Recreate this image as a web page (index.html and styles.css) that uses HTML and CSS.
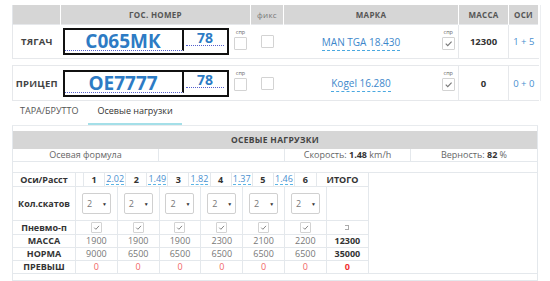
FILE: index.html
```html
<!DOCTYPE html>
<html lang="ru">
<head>
    <meta charset="UTF-8">
    <title>Осевые нагрузки</title>
    <link rel="stylesheet" href="styles.css">
</head>
<body>
    <div class="vehicles">
        <table class="vehTable">
            <colgroup>
                <col style="width:48px"><col style="width:170px"><col style="width:20px"><col style="width:33px">
                <col style="width:155px"><col style="width:20px"><col style="width:50px"><col style="width:30px">
            </colgroup>
            <tr class="headRow">
                <th></th>
                <th colspan="2">ГОС. НОМЕР</th>
                <th class="fix">фикс</th>
                <th colspan="2">МАРКА</th>
                <th>МАССА</th>
                <th>ОСИ</th>
            </tr>
            <tr class="vehRow">
                <td class="vehLabel">ТЯГАЧ</td>
                <td>
                    <div class="plate">
                        <div class="plateNum"><span>С065МК</span></div>
                        <div class="plateReg"><span>78</span></div>
                    </div>
                </td>
                <td class="sprCell"><div class="spr">спр</div><span class="chk"></span></td>
                <td class="center"><span class="chk"></span></td>
                <td class="center"><span class="link">MAN TGA 18.430</span></td>
                <td class="sprCell"><div class="spr">спр</div><span class="chk checked"><svg viewBox="0 0 10 10"><path d="M2.5 5.2 L4.3 7 L7.8 3.2" /></svg></span></td>
                <td class="center bold">12300</td>
                <td class="center blue">1 + 5</td>
            </tr>
            <tr class="gapRow"><td colspan="8"></td></tr>
            <tr class="vehRow second">
                <td class="vehLabel">ПРИЦЕП</td>
                <td>
                    <div class="plate">
                        <div class="plateNum"><span>ОЕ7777</span></div>
                        <div class="plateReg"><span>78</span></div>
                    </div>
                </td>
                <td class="sprCell"><div class="spr">спр</div><span class="chk"></span></td>
                <td class="center"><span class="chk"></span></td>
                <td class="center"><span class="link">Kogel 16.280</span></td>
                <td class="sprCell"><div class="spr">спр</div><span class="chk checked"><svg viewBox="0 0 10 10"><path d="M2.5 5.2 L4.3 7 L7.8 3.2" /></svg></span></td>
                <td class="center bold">0</td>
                <td class="center blue">0 + 0</td>
            </tr>
        </table>
    </div>

    <div class="tabs">
        <div class="tab">ТАРА/БРУТТО</div>
        <div class="tab active">Осевые нагрузки</div>
    </div>

    <div class="panel">
        <div class="panelHead">ОСЕВЫЕ НАГРУЗКИ</div>
        <div class="infoRow">
            <div>Осевая формула</div>
            <div></div>
            <div>Скорость: <b>1.48</b> km/h</div>
            <div>Верность: <b>82</b> %</div>
        </div>
        <div class="spacer"></div>

        <div class="axles">
            <div class="axRow axHead">
                <div class="lbl">Оси/Расст</div>
                <div></div>
                <div class="num">1</div><div class="dist"><span>2.02</span></div>
                <div class="num">2</div><div class="dist"><span>1.49</span></div>
                <div class="num">3</div><div class="dist"><span>1.82</span></div>
                <div class="num">4</div><div class="dist"><span>1.37</span></div>
                <div class="num">5</div><div class="dist"><span>1.46</span></div>
                <div class="num">6</div>
                <div class="num">ИТОГО</div>
            </div>
            <div class="axRow grid7 tall">
                <div class="lbl">Кол.скатов</div>
                <div><span class="sel">2<i>▼</i></span></div>
                <div><span class="sel">2<i>▼</i></span></div>
                <div><span class="sel">2<i>▼</i></span></div>
                <div><span class="sel">2<i>▼</i></span></div>
                <div><span class="sel">2<i>▼</i></span></div>
                <div><span class="sel">2<i>▼</i></span></div>
                <div></div>
            </div>
            <div class="axRow grid7">
                <div class="lbl">Пневмо-п</div>
                <div><span class="chk small checked"><svg viewBox="0 0 10 10"><path d="M2.5 5.2 L4.3 7 L7.8 3.2" /></svg></span></div>
                <div><span class="chk small checked"><svg viewBox="0 0 10 10"><path d="M2.5 5.2 L4.3 7 L7.8 3.2" /></svg></span></div>
                <div><span class="chk small checked"><svg viewBox="0 0 10 10"><path d="M2.5 5.2 L4.3 7 L7.8 3.2" /></svg></span></div>
                <div><span class="chk small checked"><svg viewBox="0 0 10 10"><path d="M2.5 5.2 L4.3 7 L7.8 3.2" /></svg></span></div>
                <div><span class="chk small checked"><svg viewBox="0 0 10 10"><path d="M2.5 5.2 L4.3 7 L7.8 3.2" /></svg></span></div>
                <div><span class="chk small checked"><svg viewBox="0 0 10 10"><path d="M2.5 5.2 L4.3 7 L7.8 3.2" /></svg></span></div>
                <div><span class="bracket"></span></div>
            </div>
            <div class="axRow grid7">
                <div class="lbl">МАССА</div>
                <div>1900</div><div>1900</div><div>1900</div><div>2300</div><div>2100</div><div>2200</div>
                <div class="total">12300</div>
            </div>
            <div class="axRow grid7">
                <div class="lbl">НОРМА</div>
                <div>9000</div><div>6500</div><div>6500</div><div>6500</div><div>6500</div><div>6500</div>
                <div class="total">35000</div>
            </div>
            <div class="axRow grid7">
                <div class="lbl">ПРЕВЫШ</div>
                <div class="red">0</div><div class="red">0</div><div class="red">0</div><div class="red">0</div><div class="red">0</div><div class="red">0</div>
                <div class="total red">0</div>
            </div>
        </div>
        <div class="panelFoot"></div>
    </div>
</body>
</html>
```

FILE: styles.css
```css
body {
    margin: 0;
    font-family: "Open Sans", "Liberation Sans", sans-serif;
    color: #444;
    background-color: #fff;
}

.vehicles {
    margin-top: 5px;
    margin-left: 12px;
    width: 528px;
    border-right: 1px solid #eceef1;
}

.vehTable {
    border-collapse: collapse;
    table-layout: fixed;
    width: 526px;
}

.headRow th {
    background-color: #d6d6d6;
    height: 19px;
    padding: 0;
    font-size: 8px;
    font-weight: 700;
    letter-spacing: 0.3px;
    color: #555;
    border-left: 1px solid #fff;
    border-right: 1px solid #fff;
}

.headRow th:first-child {
    border-left: 1px solid #e2e5e9;
}

.headRow th.fix {
    font-weight: 400;
    color: #777;
}

.vehRow td {
    height: 29px;
    padding: 0;
    border-bottom: 1px solid #e6e8eb;
    border-top: 1px solid #e6e8eb;
    font-size: 9.5px;
}

.vehRow td:first-child {
    border-left: 1px solid #e6e8eb;
}

.vehRow td:nth-child(6),
.vehRow td:nth-child(7) {
    border-right: 1px solid #e6e8eb;
}

.vehRow.second td {
    height: 30px;
}

.gapRow td {
    height: 6px;
    padding: 0;
}

.vehLabel {
    text-align: center;
    font-size: 7.5px;
    font-weight: 700;
    color: #444;
    letter-spacing: 0.2px;
}

.center {
    text-align: center;
}

.bold {
    font-weight: 700;
    color: #333;
}

.blue {
    color: #4a8fd0;
    font-size: 10px;
}

.plate {
    display: flex;
    margin-left: 2px;
    width: 162px;
    height: 23px;
    border: 2px solid #111;
}

.plateNum {
    width: 117px;
    border-right: 2px solid #111;
    display: flex;
    justify-content: center;
    align-items: flex-start;
    border-bottom: 1px dotted #5560cc;
    margin-bottom: 2px;
}

.plateNum span {
    font-size: 19px;
    font-weight: 700;
    color: #2d7bc4;
    line-height: 22px;
}

.plateReg {
    flex: 1;
    display: flex;
    justify-content: center;
    align-items: flex-start;
}

.plateReg span {
    display: block;
    width: 38px;
    text-align: center;
    font-size: 14px;
    font-weight: 700;
    color: #2d7bc4;
    line-height: 14px;
    padding-top: 1px;
    border-bottom: 1px dotted #5560cc;
}

.sprCell {
    text-align: center;
    vertical-align: top;
    padding-top: 4px !important;
}

.spr {
    font-size: 5.5px;
    line-height: 6px;
    color: #666;
    margin-bottom: 1px;
}

.chk {
    display: inline-block;
    width: 11px;
    height: 11px;
    border: 1px solid #d3d3d3;
    border-radius: 1px;
    background-color: #fff;
    vertical-align: middle;
}

.chk svg {
    display: block;
    width: 100%;
    height: 100%;
}

.chk path {
    fill: none;
    stroke: #777;
    stroke-width: 1;
}

.chk.small {
    width: 9px;
    height: 9px;
}

.link {
    color: #3d87cb;
    font-size: 10px;
    border-bottom: 1px dashed #4aa8e0;
    padding-bottom: 1px;
}

.tabs {
    display: flex;
    margin-left: 12px;
    width: 526px;
    height: 24px;
    border-bottom: 1px solid #e8ebee;
}

.tab {
    font-size: 9px;
    color: #555;
    padding: 0 8px 2px;
    line-height: 19px;
    margin-right: 2px;
}

.tab.active {
    color: #333;
    padding: 0 9px 1px;
    border-bottom: 2px solid #a4dfe8;
}

.panel {
    margin-left: 12px;
    width: 524px;
    border: 1px solid #e4e8ec;
    border-top: none;
    padding-top: 5px;
}

.panelHead {
    background-color: #d6d6d6;
    height: 18px;
    line-height: 18px;
    text-align: center;
    font-size: 8.5px;
    font-weight: 700;
    color: #444;
    letter-spacing: 0.3px;
}

.infoRow {
    display: grid;
    grid-template-columns: 146px 126px 126px 1fr;
    height: 12px;
    border-bottom: 1px solid #e4e8ec;
}

.infoRow div {
    font-size: 9px;
    line-height: 12px;
    text-align: center;
    color: #666;
    border-right: 1px solid #e4e8ec;
}

.infoRow div:last-child {
    border-right: none;
}

.infoRow b {
    color: #333;
}

.spacer {
    height: 10px;
    border-bottom: 1px solid #e4e8ec;
}

.axles {
    width: 356px;
    font-size: 9px;
}

.axRow {
    display: grid;
    height: 13px;
}

.axRow > div {
    display: flex;
    justify-content: center;
    align-items: center;
    border-right: 1px solid #e4e8ec;
    border-bottom: 1px solid #e4e8ec;
    color: #777;
}

.axHead {
    grid-template-columns: 63px 8px repeat(10, 21.1px) 22px 1fr;
    height: 14px;
}

.grid7 {
    grid-template-columns: 63px repeat(6, 41.8px) 1fr;
}

.axRow.tall {
    height: 34px;
}

.lbl {
    font-weight: 700;
    color: #333 !important;
}

.num {
    font-weight: 700;
    color: #333 !important;
}

.dist span {
    color: #4a90d0;
    border-bottom: 1px dashed #5bb5e6;
    line-height: 10px;
}

.sel {
    display: inline-flex;
    justify-content: space-between;
    align-items: center;
    width: 20px;
    height: 19px;
    padding: 0 3px 0 4px;
    border: 1px solid #d0d0d0;
    border-radius: 2px;
    font-size: 9px;
    color: #777;
}

.sel i {
    font-style: normal;
    font-size: 5px;
    color: #333;
}

.bracket {
    display: inline-block;
    width: 3px;
    height: 3px;
    border: 1px solid #aaa;
    border-left: none;
}

.total {
    font-weight: 700;
    color: #333 !important;
}

.red {
    color: #f06666 !important;
}

.total.red {
    color: #f03030 !important;
}

.panelFoot {
    height: 6px;
    border-top: 1px solid #e4e8ec;
}
```
